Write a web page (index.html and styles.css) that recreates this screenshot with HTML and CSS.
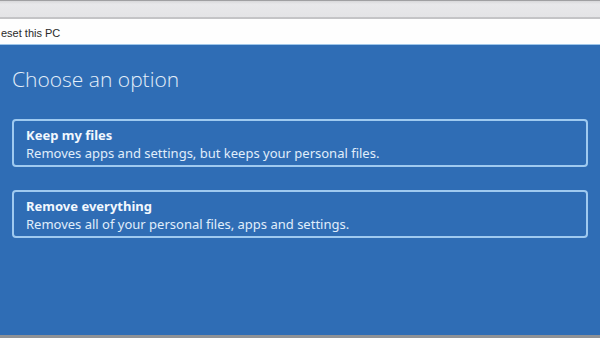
FILE: index.html
```html
<!DOCTYPE html>
<html>
<head>
<meta charset="utf-8">
<link rel="stylesheet" href="styles.css">
</head>
<body>
<div class="topbar"></div>
<div class="titlebar"><span class="title">eset this PC</span></div>
<main class="panel">
  <h1 class="heading">Choose an option</h1>
  <div class="options">
    <div class="option">
      <div class="opt-title">Keep my files</div>
      <div class="opt-desc">Removes apps and settings, but keeps your personal files.</div>
    </div>
    <div class="option">
      <div class="opt-title">Remove everything</div>
      <div class="opt-desc">Removes all of your personal files, apps and settings.</div>
    </div>
  </div>
</main>
<div class="bottombar"></div>
</body>
</html>
```
FILE: styles.css
```css
html, body {
  margin: 0;
  padding: 0;
  width: 600px;
  height: 338px;
  overflow: hidden;
  font-family: "Noto Sans", "Open Sans", sans-serif;
  display: flex;
  flex-direction: column;
}
.topbar {
  height: 16px;
  background: linear-gradient(#d8d8da, #e8e8ea 20%, #e4e4e6);
  border-top: 1px solid #a0a0a2;
  border-bottom: 2px solid #c4c4c6;
  flex: none;
}
.titlebar {
  height: 25px;
  background: #fefefe;
  border-bottom: 1px solid #9ec6ea;
  display: flex;
  align-items: center;
  flex: none;
}
.title {
  margin-left: 1px;
  font-family: "Liberation Sans", sans-serif;
  font-size: 11px;
  color: #2a2a2a;
  padding-top: 2px;
}
.panel {
  flex: 1;
  background: #2f6db5;
  padding: 20px 12px 0 12px;
  color: #e8f2fc;
}
.heading {
  margin: 0;
  font-family: "Open Sans", sans-serif;
  font-weight: 300;
  font-size: 21px;
  line-height: 28px;
  color: #e4effa;
}
.options {
  margin-top: 26px;
  display: flex;
  flex-direction: column;
  gap: 23px;
}
.option {
  height: 38px;
  border: 2px solid #9fcaf0;
  border-radius: 4px;
  padding: 6px 12px 0 12px;
  box-sizing: content-box;
  width: 548px;
}
.opt-title {
  font-weight: 700;
  font-size: 13px;
  line-height: 17px;
  color: #f2f8fe;
}
.opt-desc {
  font-size: 13px;
  line-height: 18px;
  color: #e0eefb;
}
.bottombar {
  height: 3px;
  background: #8f9296;
  flex: none;
}
```
